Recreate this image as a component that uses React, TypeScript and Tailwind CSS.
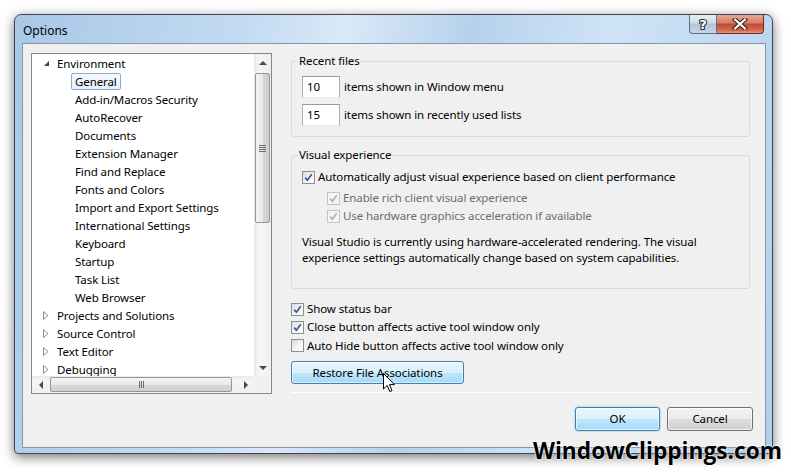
import React from "react";

type Node = { label: string; level: 0 | 1; expanded?: boolean; selected?: boolean };

const tree: Node[] = [
  { label: "Environment", level: 0, expanded: true },
  { label: "General", level: 1, selected: true },
  { label: "Add-in/Macros Security", level: 1 },
  { label: "AutoRecover", level: 1 },
  { label: "Documents", level: 1 },
  { label: "Extension Manager", level: 1 },
  { label: "Find and Replace", level: 1 },
  { label: "Fonts and Colors", level: 1 },
  { label: "Import and Export Settings", level: 1 },
  { label: "International Settings", level: 1 },
  { label: "Keyboard", level: 1 },
  { label: "Startup", level: 1 },
  { label: "Task List", level: 1 },
  { label: "Web Browser", level: 1 },
  { label: "Projects and Solutions", level: 0 },
  { label: "Source Control", level: 0 },
  { label: "Text Editor", level: 0 },
  { label: "Debugging", level: 0 },
];

function Checkbox({ checked, disabled }: { checked: boolean; disabled?: boolean }) {
  return (
    <span
      className={`w-[13px] h-[13px] shrink-0 border flex items-center justify-center ${
        disabled
          ? "border-[#c4c4c4] bg-[#f4f4f4]"
          : "border-[#8e8f8f] bg-[linear-gradient(135deg,#d8dbe0,#f6f6f6_60%,#ffffff)]"
      }`}
    >
      {checked && (
        <svg width="9" height="9" viewBox="0 0 9 9">
          <path
            d="M1.2 4.6 L3.4 7.2 L7.8 1.2"
            fill="none"
            stroke={disabled ? "#b0b0b0" : "#3d5393"}
            strokeWidth="1.7"
          />
        </svg>
      )}
    </span>
  );
}

function Arrow({ dir }: { dir: "up" | "down" | "left" | "right" }) {
  const pts = {
    up: "0,4 4,0 8,4",
    down: "0,0 8,0 4,4",
    left: "4,0 4,8 0,4",
    right: "0,0 4,4 0,8",
  }[dir];
  const v = dir === "up" || dir === "down";
  return (
    <svg width={v ? 8 : 4} height={v ? 4 : 8} viewBox={v ? "0 0 8 4" : "0 0 4 8"}>
      <polygon points={pts} fill="#4a4a4a" />
    </svg>
  );
}

function TreeView() {
  return (
    <div className="w-[241px] h-[341px] shrink-0 border border-[#828790] bg-white flex flex-col overflow-hidden">
      <div className="flex flex-1 min-h-0">
        <div className="flex-1 overflow-hidden">
          {tree.map((n) => (
            <div
              key={n.label}
              className={`h-[18px] flex items-center whitespace-nowrap ${n.level === 0 ? "pl-[7px]" : "pl-[39px]"}`}
            >
              {n.level === 0 && (
                <span className="w-[14px] flex items-center justify-center">
                  {n.expanded ? (
                    <svg width="7" height="7" viewBox="0 0 7 7">
                      <polygon points="6,1 6,6 1,6" fill="#404040" />
                    </svg>
                  ) : (
                    <svg width="6" height="9" viewBox="0 0 6 9">
                      <polygon points="0.5,0.5 5,4.5 0.5,8.5" fill="none" stroke="#8f8f8f" strokeWidth="1" />
                    </svg>
                  )}
                </span>
              )}
              <span
                className={`h-[17px] leading-[15px] px-[3px] rounded-[2px] border ${
                  n.selected
                    ? "border-[#84acdd] bg-[linear-gradient(#f6fafe,#e6eff9)]"
                    : "border-transparent"
                }`}
              >
                {n.label}
              </span>
            </div>
          ))}
        </div>
        <div className="w-[17px] bg-[linear-gradient(90deg,#e9e9e9,#f5f5f5_30%,#f0f0f0)] flex flex-col">
          <div className="h-[17px] flex items-center justify-center">
            <Arrow dir="up" />
          </div>
          <div className="flex-1">
            <div className="mt-[2px] mx-[1px] h-[150px] rounded-[2px] border border-[#979797] bg-[linear-gradient(90deg,#f4f4f4,#e9e9e9_50%,#d8d8d8_52%,#cfcfcf)] flex items-center justify-center">
              <div className="w-[7px] flex flex-col gap-[1px]">
                <div className="h-[1px] bg-[#6b6b6b]" />
                <div className="h-[1px] bg-[#6b6b6b]" />
                <div className="h-[1px] bg-[#6b6b6b]" />
                <div className="h-[1px] bg-[#6b6b6b]" />
              </div>
            </div>
          </div>
          <div className="h-[17px] flex items-center justify-center">
            <Arrow dir="down" />
          </div>
        </div>
      </div>
      <div className="h-[17px] flex bg-[linear-gradient(#e9e9e9,#f5f5f5_30%,#f0f0f0)]">
        <div className="w-[17px] flex items-center justify-center">
          <Arrow dir="left" />
        </div>
        <div className="flex-1 flex items-center">
          <div className="ml-[1px] w-[182px] h-[15px] rounded-[2px] border border-[#979797] bg-[linear-gradient(#f4f4f4,#e9e9e9_50%,#d8d8d8_52%,#cfcfcf)] flex items-center justify-center">
            <div className="h-[7px] flex gap-[1px]">
              <div className="w-[1px] bg-[#6b6b6b]" />
              <div className="w-[1px] bg-[#6b6b6b]" />
              <div className="w-[1px] bg-[#6b6b6b]" />
            </div>
          </div>
        </div>
        <div className="w-[17px] flex items-center justify-center">
          <Arrow dir="right" />
        </div>
        <div className="w-[17px] bg-[#f0f0f0]" />
      </div>
    </div>
  );
}

function NumBox({ value }: { value: string }) {
  return (
    <div className="w-[38px] h-[22px] shrink-0 bg-white border border-[#abadb3] border-t-[#9a9ca2] border-b-[#e3e9ef] pl-[4px] flex items-center">
      {value}
    </div>
  );
}

export default function App() {
  return (
    <div className="relative w-[791px] h-[474px] bg-white overflow-hidden font-['Noto_Sans',sans-serif] text-[11.5px] tracking-[-0.1px] text-black">
      {/* window */}
      <div className="ml-[14px] mt-[14px] w-[759px] h-[440px] rounded-t-[7px] rounded-b-[4px] border border-[#3f4650] bg-[linear-gradient(100deg,#a8c8e7_0%,#c3dbf2_28%,#d9e9f8_40%,#b7d1ec_55%,#cfe3f6_72%,#c0d8f0_88%,#b4cfeb_100%)] shadow-[0_3px_12px_rgba(0,0,0,0.55)] flex flex-col">
        {/* title bar */}
        <div className="h-[28px] shrink-0 flex items-start">
          <span className="ml-[8px] mt-[8px] leading-[16px] text-[12px] tracking-normal">Options</span>
          <div className="ml-auto mr-[8px] flex">
            <div className="w-[28px] h-[19px] rounded-bl-[4px] border border-t-0 border-[#5f7189] bg-[linear-gradient(#e8eef5,#cfdbe8_45%,#b3c4d8_50%,#c6d6e6)] flex items-center justify-center">
              <svg width="12" height="14" viewBox="0 0 12 14">
                <text x="6" y="12" textAnchor="middle" fontSize="13" fontWeight="bold" fontFamily="DejaVu Sans, sans-serif" fill="#fff" stroke="#2a3340" strokeWidth="2.2" paintOrder="stroke">?</text>
              </svg>
            </div>
            <div className="w-[47px] h-[19px] rounded-br-[4px] border border-l-0 border-t-0 border-[#6b2a20] bg-[linear-gradient(#e9a897,#d77a63_45%,#c34a31_50%,#d46a4f_85%,#e59a7f)] flex items-center justify-center">
              <svg width="16" height="12" viewBox="0 0 16 12">
                <path d="M3 1.5 L13 10.5 M13 1.5 L3 10.5" stroke="#2b2020" strokeWidth="4.2" strokeLinecap="square" />
                <path d="M3 1.5 L13 10.5 M13 1.5 L3 10.5" stroke="#fff" strokeWidth="2.2" strokeLinecap="square" />
              </svg>
            </div>
          </div>
        </div>

        {/* client area */}
        <div className="ml-[7px] w-[744px] h-[405px] border border-[#8597ac] bg-[#f0f0f0] flex flex-col">
          <div className="flex pl-[8px] pt-[9px]">
            <TreeView />

            <div className="ml-[19px] w-[459px] flex flex-col">
              <fieldset className="border border-[#d5dce3] rounded-[3px] pb-[10px]">
                <legend className="ml-[6px] px-[1px] leading-[16px]">Recent files</legend>
                <div className="pl-[10px] pt-[7px] flex flex-col gap-[6px]">
                  <div className="flex items-center gap-[4px]">
                    <NumBox value="10" />
                    <span>items shown in Window menu</span>
                  </div>
                  <div className="flex items-center gap-[4px]">
                    <NumBox value="15" />
                    <span>items shown in recently used lists</span>
                  </div>
                </div>
              </fieldset>

              <fieldset className="mt-[10px] border border-[#d5dce3] rounded-[3px] pb-[22px]">
                <legend className="ml-[6px] px-[1px] leading-[16px]">Visual experience</legend>
                <div className="pl-[10px] pt-[5px]">
                  <div className="h-[18px] mb-[3px] flex items-center gap-[3px]">
                    <Checkbox checked />
                    <span>Automatically adjust visual experience based on client performance</span>
                  </div>
                  <div className="h-[18px] pl-[25px] flex items-center gap-[3px] text-[#6d6d6d]">
                    <Checkbox checked disabled />
                    <span>Enable rich client visual experience</span>
                  </div>
                  <div className="h-[18px] pl-[25px] flex items-center gap-[3px] text-[#6d6d6d]">
                    <Checkbox checked disabled />
                    <span>Use hardware graphics acceleration if available</span>
                  </div>
                  <p className="mt-[9px] leading-[16px] whitespace-nowrap">
                    Visual Studio is currently using hardware-accelerated rendering. The visual
                    <br />
                    experience settings automatically change based on system capabilities.
                  </p>
                </div>
              </fieldset>

              <div className="mt-[11px] flex flex-col">
                <div className="h-[18px] flex items-center gap-[3px]">
                  <Checkbox checked />
                  <span>Show status bar</span>
                </div>
                <div className="h-[18px] flex items-center gap-[3px]">
                  <Checkbox checked />
                  <span>Close button affects active tool window only</span>
                </div>
                <div className="h-[19px] flex items-center gap-[3px]">
                  <Checkbox checked={false} />
                  <span>Auto Hide button affects active tool window only</span>
                </div>
              </div>

              <button className="mt-[6px] w-[173px] h-[23px] rounded-[3px] border border-[#3c7fb1] bg-[linear-gradient(#eaf6fd,#d9f0fc_50%,#bee6fd_51%,#a7d9f5)] shadow-[inset_0_0_0_1px_rgba(255,255,255,0.6)]">
                Restore File Associations
              </button>

              <div className="mt-[8px] h-[1px] bg-[#a0a0a0] border-b border-white" />
            </div>
          </div>

          <div className="mt-[13px] pr-[12px] flex justify-end gap-[7px]">
            <button className="w-[85px] h-[24px] rounded-[3px] border border-[#3c7fb1] bg-[linear-gradient(#eaf6fd,#d9f0fc_50%,#bee6fd_51%,#a7d9f5)] shadow-[inset_0_0_0_1px_rgba(255,255,255,0.7),0_0_2px_#67b6e6]">
              OK
            </button>
            <button className="w-[86px] h-[24px] rounded-[3px] border border-[#707070] bg-[linear-gradient(#f2f2f2,#ebebeb_50%,#dddddd_51%,#cfcfcf)] shadow-[inset_0_0_0_1px_rgba(255,255,255,0.7)]">
              Cancel
            </button>
          </div>
        </div>
      </div>

      {/* mouse pointer */}
      <svg className="absolute left-[383px] top-[373px]" width="13" height="20" viewBox="0 0 13 20">
        <path d="M0.5 0.5 L0.5 16 L4.2 12.4 L6.8 18.6 L9 17.6 L6.5 11.6 L11.5 11.6 Z" fill="#fff" stroke="#000" strokeWidth="1" />
      </svg>

      {/* watermark */}
      <div className="absolute right-[9px] bottom-[10px] font-['Open_Sans',sans-serif] font-bold text-[22.7px] tracking-normal leading-[26px] text-black [text-shadow:0_0_2px_#fff,0_0_2px_#fff]">
        WindowClippings.com
      </div>
    </div>
  );
}
